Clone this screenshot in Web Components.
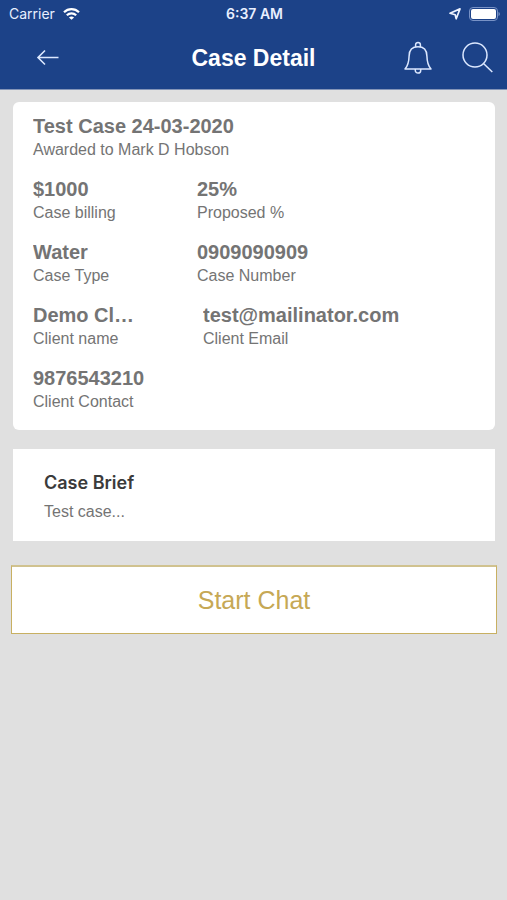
<!DOCTYPE html>
<html lang="en">
<head>
<meta charset="utf-8">
<meta name="viewport" content="width=device-width, initial-scale=1">
<title>Case Detail</title>
<style>
html { background: #e0e0e0; }
body { margin: 0; min-height: 100vh; font-family: "Liberation Sans", Arial, sans-serif; color: #747474; }
</style>
</head>
<body>
<case-screen></case-screen>
<script>
const define = (name, html) => {
  const template = document.createElement('template');
  template.innerHTML = html;
  customElements.define(name, class extends HTMLElement {
    constructor() {
      super();
      this.attachShadow({ mode: 'open' }).append(template.content.cloneNode(true));
    }
  });
};

define('status-bar', `
<style>
:host { display: grid; grid-template-columns: 1fr auto 1fr; align-items: center; height: 28px; padding: 0 7px 0 9px; font: 14px/28px Inter, sans-serif; color: #e8efff; }
.left, .right { display: flex; align-items: center; gap: 8px; }
.right { justify-content: flex-end; }
.time { font-weight: 600; }
svg { display: block; }
</style>
<div class="left"><span>Carrier</span>
<svg width="17" height="13" viewBox="0 0 17 13" fill="none" stroke="#fff" stroke-width="2.2"><path d="M1 4.200C5.200.1 11.800.1 16 4.200M3.800 7.300c2.700-2.600 6.700-2.600 9.400 0"/><path d="M8.500 11.800 5.900 9.400c1.500-1.300 3.700-1.300 5.200 0z" fill="#fff" stroke="none"/></svg></div>
<span class="time">6:37 AM</span>
<div class="right">
<svg width="12" height="12" viewBox="0 0 12 12" fill="none" stroke="#eef3ff" stroke-width="1.700" stroke-linejoin="round"><path d="M1 5.200 11 .9 7.200 10.800 6.200 6.700z"/></svg>
<svg width="31" height="14" viewBox="0 0 31 14"><rect x=".5" y=".5" width="28" height="13" rx="3.500" fill="none" stroke="#7892c6"/><rect x="2" y="2" width="25" height="10" rx="2" fill="#fff"/><path d="M29.500 5c1.800.5 1.800 3.500 0 4z" fill="#7892c6"/></svg></div>`);

define('app-header', `
<style>
:host { display: block; background: #1c4288; color: #fff; border-bottom: 1px solid #8495b8; }
.bar { display: grid; grid-template-columns: 1fr auto 1fr; align-items: center; height: 60px; padding: 0 14px 1px; }
h1 { margin: 0; font-size: 23px; line-height: 28px; font-weight: 700; }
.actions { display: flex; justify-content: flex-end; gap: 28px; }
button { display: block; margin: 0; padding: 0; border: 0; background: none; color: #dce8ff; }
.back { justify-self: start; padding-left: 21px; }
svg { display: block; fill: none; stroke: currentColor; }
</style>
<status-bar></status-bar>
<div class="bar">
<button class="back" type="button" aria-label="Back"><svg width="25" height="18" viewBox="0 0 25 18" stroke-width="1.600"><path d="M23.500 8.500H3M10 1.500l-7 7 7 7"/></svg></button>
<h1><slot></slot></h1>
<div class="actions">
<button type="button" aria-label="Notifications"><svg width="30" height="34" viewBox="0 0 30 34" stroke-width="1.500" stroke-linejoin="round"><path d="M12.600 6.200V3.800a2.400 2.400 0 0 1 4.800 0v2.400M2 28C4.800 25 5.900 22.500 6.100 15c.1-6 3.400-9.200 8.900-9.200s8.800 3.200 8.900 9.200c.2 7.500 1.300 10 4.100 13zM12.300 28v1.400a2.700 2.700 0 0 0 5.400 0V28"/></svg></button>
<button type="button" aria-label="Search"><svg width="32" height="34" viewBox="0 0 32 34" stroke-width="1.500"><circle cx="14" cy="14" r="12"/><path d="m22.500 22.500 8.800 8.500"/></svg></button>
</div></div>`);

define('case-field', `
<style>
:host { display: block; min-width: 0; white-space: nowrap; }
.value { font-size: 20px; line-height: 24px; font-weight: 700; overflow: hidden; text-overflow: ellipsis; }
.label { font-size: 16px; line-height: 24px; }
</style>
<div class="value"><slot name="value"></slot></div>
<div class="label"><slot></slot></div>`);

define('field-row', `
<style>
:host { display: grid; grid-template-columns: var(--first, 34fr) 1fr; }
</style><slot></slot>`);

define('case-summary', `
<style>
:host { display: flex; flex-direction: column; gap: 15px; padding: 12px 20px 16px; background: #fff; border-radius: 6px; }
</style><slot></slot>`);

define('case-brief', `
<style>
:host { display: block; padding: 21px 31px 19px; background: #fff; }
h2 { margin: 0 0 6px; font: 600 18px/26px Inter, sans-serif; color: #3b3b3b; }
p { margin: 0; font-size: 16px; line-height: 20px; }
</style>
<h2><slot name="title"></slot></h2><p><slot></slot></p>`);

define('outline-button', `
<style>
:host { display: block; }
button { display: block; width: 100%; padding: 19px 0; background: #fff; border: 1px solid #c8b062; border-top: 2px solid #d0c28f; color: #c6a855; font: 25px/28px "Liberation Sans", Arial, sans-serif; }
</style><button type="button"><slot></slot></button>`);

define('case-screen', `
<style>
:host { display: block; }
main { display: flex; flex-direction: column; padding: 12px 10px 24px 11px; }
.cards { display: grid; gap: 19px; padding: 0 2px 24px; }
field-row { --first: 164px; }
.wide { --first: 170px; }
</style>
<app-header>Case Detail</app-header>
<main>
<div class="cards">
<case-summary>
<case-field><span slot="value">Test Case 24-03-2020</span>Awarded to Mark D Hobson</case-field>
<field-row><case-field><span slot="value">$1000</span>Case billing</case-field><case-field><span slot="value">25%</span>Proposed %</case-field></field-row>
<field-row><case-field><span slot="value">Water</span>Case Type</case-field><case-field><span slot="value">0909090909</span>Case Number</case-field></field-row>
<field-row class="wide"><case-field><span slot="value">Demo Cl…</span>Client name</case-field><case-field><span slot="value">test@mailinator.com</span>Client Email</case-field></field-row>
<case-field><span slot="value">9876543210</span>Client Contact</case-field>
</case-summary>
<case-brief><span slot="title">Case Brief</span>Test case...</case-brief>
</div>
<outline-button>Start Chat</outline-button>
</main>`);
</script>
</body>
</html>
